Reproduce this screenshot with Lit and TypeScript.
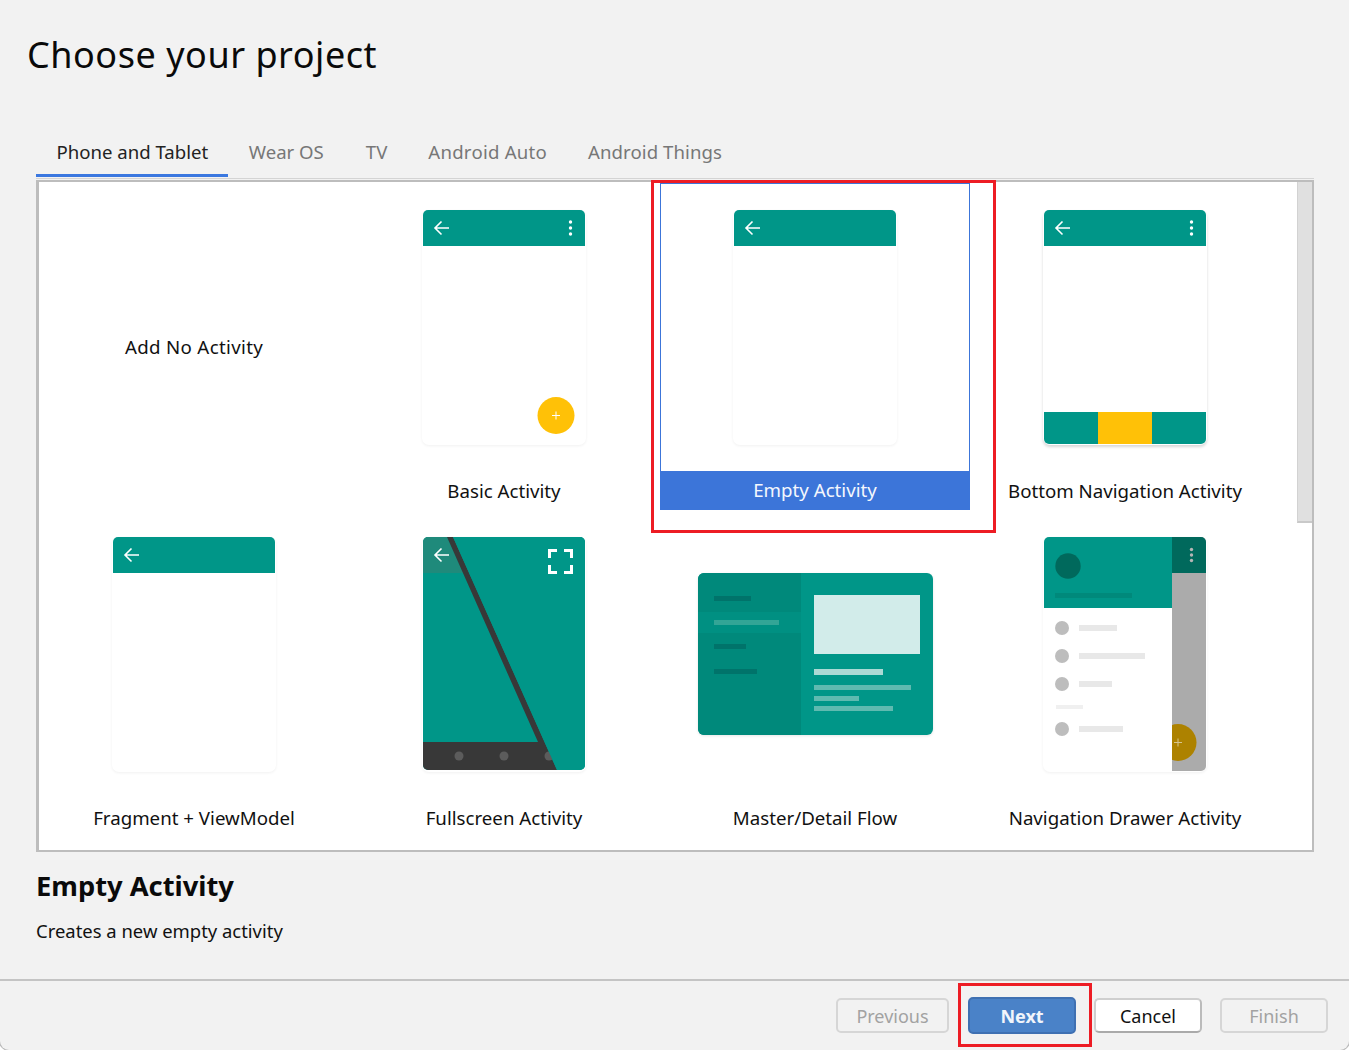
import {LitElement, css, html, svg} from 'lit';
import {customElement} from 'lit/decorators.js';
import {classMap} from 'lit/directives/class-map.js';

const TEAL = '#009688';
const AMBER = '#ffc107';

const arrow = (x = 19, y = 18) => svg`
  <path d="M${x + 7} ${y}H${x - 6.5}M${x - 0.5} ${y - 6.5}L${x - 7} ${y}L${x - 0.5} ${y + 6.5}"
    fill="none" stroke="#fff" stroke-width="1.6"/>`;

const dots = (fill = '#fff') => svg`
  <circle cx="147.5" cy="12" r="1.7" fill="${fill}"/>
  <circle cx="147.5" cy="18" r="1.7" fill="${fill}"/>
  <circle cx="147.5" cy="24" r="1.7" fill="${fill}"/>`;

const phoneTop = (menu: boolean) => svg`
  <path d="M0 36V5a5 5 0 0 1 5-5H157a5 5 0 0 1 5 5V36Z" fill="${TEAL}"/>
  ${arrow()}
  ${menu ? dots() : ''}`;

const plain = (menu: boolean) => phoneTop(menu);

const basic = () => svg`
  ${phoneTop(true)}
  <circle cx="133" cy="205.500" r="18.500" fill="${AMBER}"/>
  <path d="M129 205.500H137M133 201.500V209.500" stroke="#fff" stroke-width="1" fill="none"/>`;

const bottomNav = () => svg`
  ${phoneTop(true)}
  <path d="M0 202H162V229a5 5 0 0 1-5 5H5a5 5 0 0 1-5-5Z" fill="${TEAL}"/>
  <rect x="54" y="202" width="54" height="32" fill="${AMBER}"/>`;

const fullscreen = () => svg`
  <defs><clipPath id="fs"><rect width="162" height="233" rx="5"/></clipPath></defs>
  <g clip-path="url(#fs)">
    <rect width="162" height="233" fill="${TEAL}"/>
    <path d="M0 0H24L40 36H0Z" fill="#1f8a7b"/>
    <path d="M24 0H30L134 233H0V205H115Z" fill="#383838"/>
    <circle cx="36" cy="219" r="4.500" fill="#5c5c5c"/>
    <circle cx="81" cy="219" r="4.500" fill="#5c5c5c"/>
    <circle cx="126" cy="219" r="4.500" fill="#5c5c5c"/>
    <path d="M30 0H162V233H134Z" fill="${TEAL}"/>
  </g>
  ${arrow()}
  <path d="M126.500 21V13.500H134M141 13.500H148.500V21M148.500 28V35.500H141M134 35.500H126.500V28"
    fill="none" stroke="#fff" stroke-width="3"/>`;

const masterDetail = () => svg`
  <defs><clipPath id="md"><rect width="235" height="162" rx="6"/></clipPath></defs>
  <g clip-path="url(#md)">
    <rect width="235" height="162" fill="${TEAL}"/>
    <rect width="103" height="162" fill="#00897b"/>
    <rect y="39" width="103" height="21" fill="#009082"/>
    <rect x="16" y="23" width="37" height="5" fill="#00736a"/>
    <rect x="16" y="47" width="65" height="5" fill="#33a596"/>
    <rect x="16" y="71" width="32" height="5" fill="#00736a"/>
    <rect x="16" y="96" width="43" height="5" fill="#00736a"/>
    <rect x="116" y="22" width="106" height="59" fill="#d2ecea"/>
    <rect x="116" y="96" width="69" height="6" fill="#acd9d4"/>
    <rect x="116" y="112" width="97" height="5" fill="#5fbab0"/>
    <rect x="116" y="123" width="45" height="5" fill="#5fbab0"/>
    <rect x="116" y="133" width="79" height="5" fill="#5fbab0"/>
  </g>`;

const drawer = () => svg`
  <defs><clipPath id="nd"><rect width="162" height="234" rx="5"/></clipPath></defs>
  <g clip-path="url(#nd)">
    <rect x="128" width="34" height="234" fill="#ababab"/>
    <rect x="128" width="34" height="36" fill="#00695c"/>
    <circle cx="134" cy="205.500" r="18.500" fill="#ad8200"/>
    <path d="M130 205.500H138M134 201.500V209.500" stroke="#d6c58f" stroke-width="1" fill="none"/>
    <rect y="71" width="128" height="163" fill="#fff"/>
    <rect width="128" height="71" fill="${TEAL}"/>
  </g>
  ${[12.500, 18, 23.500].map((cy) => svg`<circle cx="147.500" cy="${cy}" r="1.700" fill="#b5b5b5"/>`)}
  <circle cx="24" cy="29" r="12.700" fill="#00695c"/>
  <rect x="11" y="56" width="77" height="5" fill="#00897b"/>
  <circle cx="18" cy="91" r="7" fill="#bdbdbd"/>
  <circle cx="18" cy="119" r="7" fill="#bdbdbd"/>
  <circle cx="18" cy="147" r="7" fill="#bdbdbd"/>
  <circle cx="18" cy="192" r="7" fill="#bdbdbd"/>
  <rect x="35" y="88" width="38" height="6" fill="#e8e8e8"/>
  <rect x="35" y="116" width="66" height="6" fill="#e8e8e8"/>
  <rect x="35" y="144" width="33" height="6" fill="#e8e8e8"/>
  <rect x="12" y="168" width="27" height="4" fill="#f0f0f0"/>
  <rect x="35" y="189" width="44" height="6" fill="#e8e8e8"/>`;

interface Template {
  name: string;
  art?: unknown;
  wide?: boolean;
  selected?: boolean;
  deep?: boolean;
}

const TEMPLATES: Template[] = [
  {name: 'Add No Activity'},
  {name: 'Basic Activity', art: basic()},
  {name: 'Empty Activity', art: plain(false), selected: true},
  {name: 'Bottom Navigation Activity', art: bottomNav(), deep: true},
  {name: 'Fragment + ViewModel', art: plain(false)},
  {name: 'Fullscreen Activity', art: fullscreen()},
  {name: 'Master/Detail Flow', art: masterDetail(), wide: true},
  {name: 'Navigation Drawer Activity', art: drawer()},
];

const TABS = ['Phone and Tablet', 'Wear OS', 'TV', 'Android Auto', 'Android Things'];

@customElement('app-root')
export class AppRoot extends LitElement {
  static styles = css`
    :host {
      display: block;
      position: relative;
      width: 1349px;
      height: 1050px;
      overflow: hidden;
      background: #fff;
      color: #111;
      font-family: "Noto Sans", "Open Sans", sans-serif;
      font-size: 18.7px;
    }
    .window {
      height: 1050px;
      overflow: hidden;
      background: #f2f2f2;
      border-radius: 0 0 9px 9px;
      box-shadow: 0 0 0 1px #bbb;
    }
    .title {
      margin: 0;
      height: 130px;
      padding: 30px 0 0 27px;
      box-sizing: border-box;
      font-size: 36px;
      font-weight: 400;
      line-height: 50px;
      letter-spacing: 0.53px;
      color: #0a0a0a;
    }
    .tabs {
      display: flex;
      height: 47px;
      margin-left: 36px;
      font-size: 18.6px;
    }
    .tab {
      padding: 9px 20.500px 0;
      box-sizing: border-box;
      line-height: 25px;
      color: #777;
    }
    .tab.active {
      color: #222;
      padding-right: 20px;
      border-bottom: 3px solid #3b78e0;
    }
    .tab:nth-child(2) {
      padding-right: 21.500px;
    }
    .tab:nth-child(4) {
      letter-spacing: 0.25px;
    }
    .tab:nth-child(5) {
      letter-spacing: 0.07px;
    }
    .rule {
      height: 1px;
      margin: 1px 35px 0 36px;
      background: #d4d4d4;
    }
    .panel {
      position: relative;
      box-sizing: border-box;
      width: 1278px;
      height: 672px;
      margin: 1px 0 0 36px;
      border: 2px solid #bdbdbd;
      border-left-width: 3px;
      background: #fff;
      overflow: hidden;
    }
    .grid {
      display: grid;
      grid-template-columns: 310px 311px 310px 310px;
      grid-auto-rows: 327px;
      padding-top: 1px;
    }
    .cell {
      display: flex;
      flex-direction: column;
      align-items: center;
      box-sizing: border-box;
      padding-top: 27px;
    }
    .cell:nth-child(4n + 2) {
      padding-right: 1px;
    }
    .cell.blank {
      justify-content: center;
      padding-top: 0;
      letter-spacing: 0.33px;
    }
    .cell.selected {
      box-shadow: inset 1px 1px 0 #3c75d9, inset -1px 0 0 #3c75d9;
    }
    .thumb {
      display: flex;
      align-items: center;
      justify-content: center;
      height: 235px;
    }
    .phone {
      box-sizing: border-box;
      width: 164px;
      height: 235px;
      padding: 0 1px;
      border-radius: 7px;
      background: #fff;
      box-shadow: 0 1px 3px rgba(0, 0, 0, 0.06);
    }
    .phone.deep {
      box-shadow: 0 2px 3px rgba(0, 0, 0, 0.16);
    }
    .sheet {
      width: 235px;
      height: 162px;
      margin-bottom: 1px;
      border-radius: 6px;
      box-shadow: 0 1px 3px rgba(0, 0, 0, 0.1);
    }
    svg {
      display: block;
    }
    .label {
      align-self: stretch;
      margin-top: auto;
      height: 39px;
      line-height: 39px;
      text-align: center;
      white-space: nowrap;
    }
    .cell.selected .label {
      line-height: 37px;
      background: #3c75d9;
      color: #f4f7fd;
    }
    .scrollbar {
      position: absolute;
      top: 0;
      right: 0;
      width: 15px;
      height: 341px;
      box-sizing: border-box;
      background: #e0e0e0;
      border-left: 1px solid #d2d2d2;
      border-bottom: 2px solid #c9c9c9;
    }
    .summary {
      height: 127px;
      padding-left: 36px;
      box-sizing: border-box;
    }
    .summary h2 {
      margin: 0;
      padding-top: 14px;
      font-size: 27.300px;
      font-weight: 700;
      line-height: 40px;
      color: #0a0a0a;
    }
    .summary p {
      margin: 0;
      padding-top: 11px;
      font-size: 18.450px;
      line-height: 28px;
    }
    .footer {
      display: flex;
      justify-content: flex-end;
      align-items: center;
      gap: 18px;
      height: 69px;
      padding-right: 21px;
      border-top: 2px solid #c4c4c4;
    }
    .btn {
      box-sizing: border-box;
      height: 35px;
      width: 108px;
      border: 2px solid #d6d6d6;
      border-radius: 5px;
      background: #f2f2f2;
      color: #a2a2a2;
      font: inherit;
      font-size: 18px;
      line-height: 30px;
      padding: 0;
      text-align: center;
    }
    .btn.previous {
      width: 113px;
      margin-right: 1px;
    }
    .btn.next {
      height: 37px;
      background: #4a82c8;
      border-color: #3f70b2;
      color: #f1f5fb;
      font-weight: 700;
    }
    .btn.cancel {
      background: #fff;
      border-color: #cfcfcf;
      border-right-color: #bbb;
      border-bottom-color: #aaa;
      color: #111;
    }
    .mark {
      position: absolute;
      box-sizing: border-box;
      border: 3px solid #ed1c24;
      pointer-events: none;
    }
    .mark.card {
      left: 651px;
      top: 180px;
      width: 345px;
      height: 353px;
    }
    .mark.action {
      left: 958px;
      top: 983px;
      width: 134px;
      height: 64px;
    }
  `;

  private renderCell(t: Template) {
    const classes = {cell: true, selected: !!t.selected, blank: !t.art};
    if (!t.art) {
      return html`<div class=${classMap(classes)}>${t.name}</div>`;
    }
    const w = t.wide ? 235 : 162;
    const h = t.wide ? 162 : 234;
    const frame = t.wide ? 'sheet' : t.deep ? 'phone deep' : 'phone';
    return html`
      <div class=${classMap(classes)}>
        <div class="thumb">
          <div class=${frame}>
            <svg width=${w} height=${h} viewBox="0 0 ${w} ${h}">${t.art}</svg>
          </div>
        </div>
        <div class="label">${t.name}</div>
      </div>`;
  }

  render() {
    return html`
      <div class="window">
        <h1 class="title">Choose your project</h1>
        <div class="tabs">
          ${TABS.map((t, i) => html`<div class=${i === 0 ? 'tab active' : 'tab'}>${t}</div>`)}
        </div>
        <div class="rule"></div>
        <section class="panel">
          <div class="grid">${TEMPLATES.map((t) => this.renderCell(t))}</div>
          <div class="scrollbar"></div>
        </section>
        <div class="summary">
          <h2>Empty Activity</h2>
          <p>Creates a new empty activity</p>
        </div>
        <div class="footer">
          <button class="btn previous">Previous</button>
          <button class="btn next">Next</button>
          <button class="btn cancel">Cancel</button>
          <button class="btn">Finish</button>
        </div>
      </div>
      <div class="mark card"></div>
      <div class="mark action"></div>
    `;
  }
}
